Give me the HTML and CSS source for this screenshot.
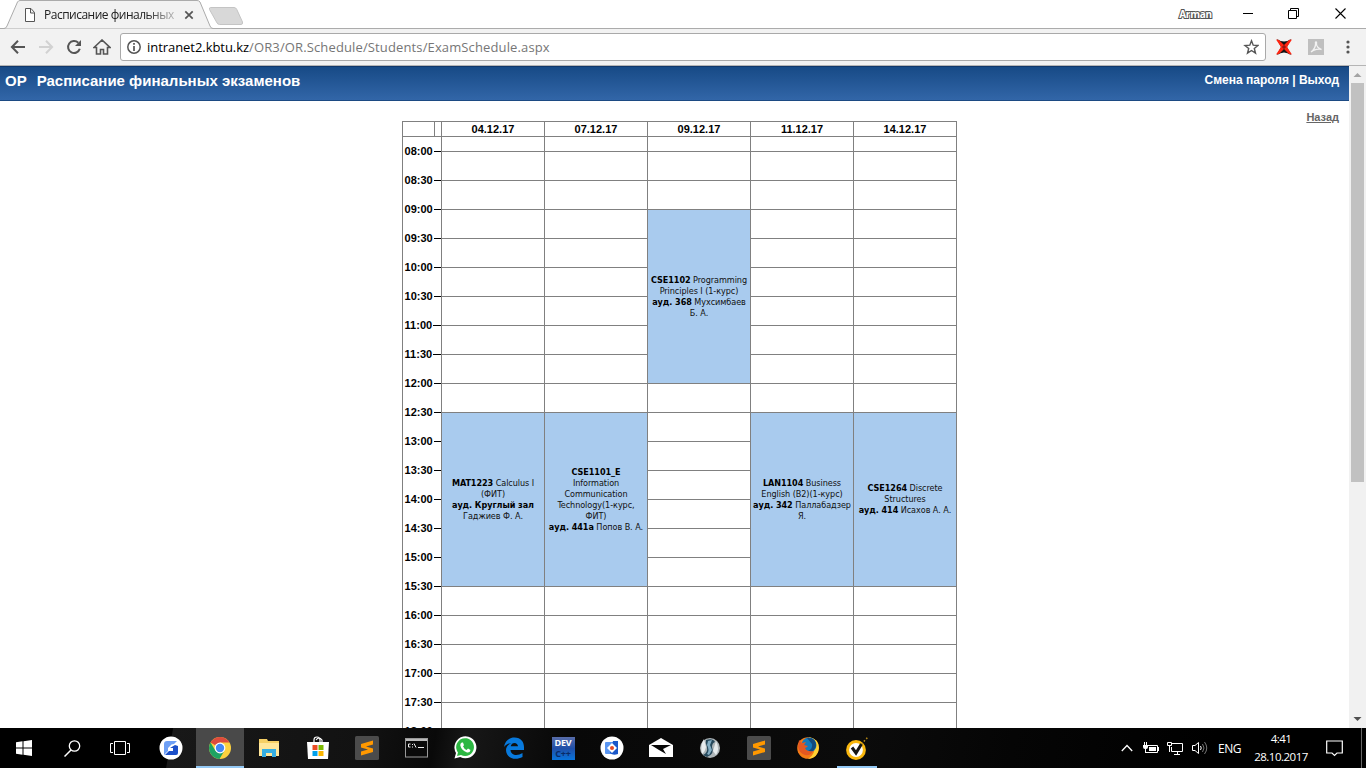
FILE: index.html
```html
<!DOCTYPE html>
<html lang="ru">
<head>
<meta charset="utf-8">
<title>Расписание финальных экзаменов</title>
<link rel="stylesheet" href="styles.css">
</head>
<body>
<div class="screen">
  <header class="tabstrip">
    <svg class="tab-shape" width="260" height="29" viewBox="0 0 260 29">
      <path d="M0 28.5H4Q6 28.5 7 26L17.500 2Q18.500 0.500 20 0.500H197Q199 0.500 200 2L210 26Q211 28.500 213 28.500H260V29H0Z" fill="#f2f2f2" stroke="#ababab"/>
      <path d="M210.500 7.500H234Q236 7.500 236.800 9.500L242.500 22Q243 24.500 241 24.500H219.500Q217.500 24.500 216.500 22L209.500 9.500Q209 7.500 210.500 7.500Z" fill="#d8d8d8" stroke="#c4c4c4"/>
    </svg>
    <div class="tab">
      <svg width="12" height="14" viewBox="0 0 12 14"><path d="M1.500 0.500H7L10.500 4.500V13.500H1.500ZM6.500 1V5H10.500" fill="#fff" stroke="#555"/></svg>
      <span class="tab-title">Расписание финальных</span>
      <svg class="tab-close" width="10" height="10" viewBox="0 0 10 10"><path d="M1.300 1.300L8.700 8.700M8.700 1.300L1.300 8.700" stroke="#555" stroke-width="1.700"/></svg>
    </div>
    <div class="window-controls">
      <span class="profile">Arman</span>
      <svg width="11" height="11" viewBox="0 0 11 11"><path d="M0 5.500H10" stroke="#000"/></svg>
      <svg width="11" height="11" viewBox="0 0 11 11"><path d="M0.500 2.500H8.500V10.500H0.500ZM2.500 2.500V0.500H10.500V8.500H8.500" fill="none" stroke="#000"/></svg>
      <svg width="11" height="11" viewBox="0 0 11 11"><path d="M0.500 0.500L10.500 10.500M10.500 0.500L0.500 10.500" stroke="#000" stroke-width="1.100"/></svg>
    </div>
  </header>

  <nav class="toolbar">
    <svg class="nav-back" width="16" height="16" viewBox="0 0 16 16"><path d="M15 8H2.500M8 1.700L1.900 8L8 14.300" fill="none" stroke="#555" stroke-width="2"/></svg>
    <svg class="nav-forward" width="16" height="16" viewBox="0 0 16 16"><path d="M1 8H13.500M8 1.700L14.100 8L8 14.300" fill="none" stroke="#d2d2d2" stroke-width="2"/></svg>
    <svg class="nav-reload" width="16" height="16" viewBox="0 0 16 16"><path d="M13.800 9.800A6 6 0 1 1 12.300 3.700" fill="none" stroke="#555" stroke-width="2"/><path d="M15 1V7H9Z" fill="#555"/></svg>
    <svg class="nav-home" width="18" height="16" viewBox="0 0 18 16"><path d="M1 8.500L9 1L17 8.500H14.500V15H10.500V10.500H7.500V15H3.500V8.500Z" fill="none" stroke="#555" stroke-width="1.600"/></svg>
    <div class="omnibox">
      <svg width="16" height="16" viewBox="0 0 16 16"><circle cx="8" cy="8" r="6.200" fill="none" stroke="#555" stroke-width="1.500"/><path d="M8 4V5.700M8 7V12" stroke="#555" stroke-width="1.700"/></svg>
      <span class="url"><span class="host">intranet2.kbtu.kz</span><span class="path">/OR3/OR.Schedule/Students/ExamSchedule.aspx</span></span>
      <svg width="16" height="16" viewBox="0 0 16 16"><path d="M8.500 1.800L10.200 6.200L15 6.500L11.300 9.500L12.500 14.100L8.500 11.500L4.500 14.100L5.700 9.500L2 6.500L6.800 6.200Z" fill="none" stroke="#555" stroke-width="1.400"/></svg>
    </div>
    <svg class="ext-x" width="18" height="18" viewBox="0 0 18 18"><path d="M2 1Q9 6 16 1L12 9L16 17Q9 12 2 17L6 9Z" fill="#111"/><path d="M1 1.500L4 2L9 7L14 2L17 1.500L12 9L17 16.500L14 16L9 11L4 16L1 16.500L6 9Z" fill="#ff2410"/><path d="M7 9H11M9 7V11" stroke="#711" /></svg>
    <svg class="ext-pdf" width="16" height="16" viewBox="0 0 16 16"><rect width="16" height="16" fill="#bfbfbf"/><path d="M3 13C6 11 8 7 7.500 4C7 2.500 9 2.500 8.500 4.500C8 7 11 10 13.500 10.500C11 9.500 6 10.500 3 13Z" fill="none" stroke="#f2f2f2" stroke-width="1.300"/></svg>
    <svg class="menu-dots" width="4" height="14" viewBox="0 0 4 14"><g fill="#555"><circle cx="2" cy="2" r="1.600"/><circle cx="2" cy="7" r="1.600"/><circle cx="2" cy="12" r="1.600"/></g></svg>
  </nav>

  <div class="viewport">
    <main class="page">
      <div class="banner">
        <div class="brand"><span class="logo">OP</span><h1>Расписание финальных экзаменов</h1></div>
        <div class="account">Смена пароля | Выход</div>
      </div>
      <div class="content">
        <div class="schedule">
          <div class="times">
            <div class="times-head"><i></i></div>
            <div class="time">08:00</div><div class="time">08:30</div><div class="time">09:00</div><div class="time">09:30</div>
            <div class="time">10:00</div><div class="time">10:30</div><div class="time">11:00</div><div class="time">11:30</div>
            <div class="time">12:00</div><div class="time">12:30</div><div class="time">13:00</div><div class="time">13:30</div>
            <div class="time">14:00</div><div class="time">14:30</div><div class="time">15:00</div><div class="time">15:30</div>
            <div class="time">16:00</div><div class="time">16:30</div><div class="time">17:00</div><div class="time">17:30</div>
            <div class="time">18:00</div>
          </div>
          <div class="day">
            <div class="date">04.12.17</div><div class="half"></div>
            <div class="free n9"></div>
            <div class="exam"><p><b>MAT1223</b> Calculus I</p><p>(ФИТ)</p><p><b>ауд. Круглый зал</b></p><p>Гаджиев Ф. А.</p></div>
            <div class="free n6"></div>
          </div>
          <div class="day">
            <div class="date">07.12.17</div><div class="half"></div>
            <div class="free n9"></div>
            <div class="exam"><p><b>CSE1101_E</b></p><p>Information</p><p>Communication</p><p>Technology(1-курс,</p><p>ФИТ)</p><p><b>ауд. 441а</b> Попов В. А.</p></div>
            <div class="free n6"></div>
          </div>
          <div class="day">
            <div class="date">09.12.17</div><div class="half"></div>
            <div class="free n2"></div>
            <div class="exam"><p><b>CSE1102</b> Programming</p><p>Principles I (1-курс)</p><p><b>ауд. 368</b> Мухсимбаев</p><p>Б. А.</p></div>
            <div class="free n13"></div>
          </div>
          <div class="day">
            <div class="date">11.12.17</div><div class="half"></div>
            <div class="free n9"></div>
            <div class="exam"><p><b>LAN1104</b> Business</p><p>English (B2)(1-курс)</p><p><b>ауд. 342</b> Паллабадзер</p><p>Я.</p></div>
            <div class="free n6"></div>
          </div>
          <div class="day last">
            <div class="date">14.12.17</div><div class="half"></div>
            <div class="free n9"></div>
            <div class="exam"><p><b>CSE1264</b> Discrete</p><p>Structures</p><p><b>ауд. 414</b> Исахов А. А.</p></div>
            <div class="free n6"></div>
          </div>
        </div>
        <a class="back">Назад</a>
      </div>
    </main>
    <aside class="scrollbar">
      <svg width="17" height="17" viewBox="0 0 17 17"><path d="M4.500 11L8.500 7L12.500 11Z" fill="#a3a3a3"/></svg>
      <div class="thumb"></div>
      <svg class="down" width="17" height="17" viewBox="0 0 17 17"><path d="M4.500 6L8.500 10L12.500 6Z" fill="#505050"/></svg>
    </aside>
  </div>

  <footer class="taskbar">
    <div class="system">
      <div class="sys"><svg width="16" height="16" viewBox="0 0 16 16"><path d="M0 2.200L6.500 1.300V7.500H0ZM7.500 1.200L16 0V7.500H7.500ZM0 8.500H6.500V14.700L0 13.800ZM7.500 8.500H16V16L7.500 14.800Z" fill="#fff"/></svg></div>
      <div class="sys"><svg width="17" height="17" viewBox="0 0 17 17"><circle cx="10.500" cy="6" r="5.200" fill="none" stroke="#fff" stroke-width="1.300"/><path d="M7 10L0.500 16.500" stroke="#fff" stroke-width="1.500"/></svg></div>
      <div class="sys"><svg width="20" height="14" viewBox="0 0 20 14"><path d="M4.500 0.500H15.500V13.500H4.500ZM3 2.500H0.500V11.500H3M17 2.500H19.500V11.500H17" fill="none" stroke="#fff"/></svg></div>
    </div>
    <div class="apps">
      <div class="app"><svg width="24" height="24" viewBox="0 0 24 24"><circle cx="12" cy="12" r="11.500" fill="#fff"/><path d="M5 8Q5 5 8 5H18L15 8L12.500 8.500L9 12V15L5 19Z" fill="#6d9ff5"/><path d="M19 10V17Q19 19 17 19H6L10 15H14V12H11L16 9Z" fill="#1b4fc9"/></svg></div>
      <div class="app active"><svg width="24" height="24" viewBox="0 0 24 24"><circle cx="12" cy="12" r="11" fill="#fcd13f"/><path d="M12 12L2.500 6.500A11 11 0 0 1 21.500 6.500H12Z" fill="#de4b3d"/><path d="M2.500 6.500A11 11 0 0 0 11.500 23L16.500 14.500L12 12L7.500 14.800Z" fill="#1da362"/><circle cx="12" cy="12" r="5.400" fill="#fff"/><circle cx="12" cy="12" r="4.200" fill="#4587f4"/></svg></div>
      <div class="app"><svg width="22" height="20" viewBox="0 0 22 20"><path d="M1 1H9L10 3H21V18H1Z" fill="#f5cf65"/><path d="M1 5H21V18H1Z" fill="#ffe69a"/><path d="M4 19V11H18V19H14V15H8V19Z" fill="#35aee2"/></svg></div>
      <div class="app"><svg width="24" height="24" viewBox="0 0 24 24"><path d="M8 8V4Q8 1 11 1Q14 1 14 4V8M10 4Q13 0 16 4V7" fill="none" stroke="#fff" stroke-width="1.200"/><path d="M1 6H23L22 23H2Z" fill="#fff"/><path d="M6.500 9H11.500V14H6.500Z" fill="#eb4d25"/><path d="M12.500 9H17.500V14H12.500Z" fill="#7bb900"/><path d="M6.500 15H11.500V20H6.500Z" fill="#00a1ed"/><path d="M12.500 15H17.500V20H12.500Z" fill="#fcb600"/></svg></div>
      <div class="app"><svg width="24" height="24" viewBox="0 0 24 24"><rect width="24" height="24" rx="1.500" fill="#4b4b4b"/><path d="M6 8L18 4.500V8.500L11 10.500L18 12.500V16L6 19.500V15.500L13 13.500L6 11.500Z" fill="#ff9800"/></svg></div>
      <div class="app"><svg width="23" height="20" viewBox="0 0 23 20"><rect x="0.500" y="0.500" width="22" height="18.500" fill="#0a0a0a" stroke="#999"/><path d="M1 2H22" stroke="#bbb" stroke-width="2"/><path d="M5.500 6H3.500V9H5.500M7.500 6V7M7.500 8.500V9.500M9 5.500L11 9.500M13 9.500H19" fill="none" stroke="#eee"/></svg></div>
      <div class="app"><svg width="24" height="24" viewBox="0 0 24 24"><path d="M1.500 22.500L3 17A11 11 0 1 1 7.200 21Z" fill="#fff"/><path d="M4 20L5 16.500A8.900 8.900 0 1 1 8 19Z" fill="#2cb742"/><path d="M8.800 6.500Q7 7.500 7.300 9.500Q8.500 14.500 14 16.500Q17 17 17.500 14L15 12.600L13.600 14Q11 13 10 10.300L11 9.200L10 6.500Z" fill="#fff"/></svg></div>
      <div class="app"><svg width="22" height="22" viewBox="0 0 22 22"><path d="M1 10C2 3 7 0.500 11.500 0.500C18 0.500 21 5 21 10V13H7.500C8 19 15 19 19.500 16V20C12 24 3 21 3 13C3 10 5 7.500 8.500 6C5 6.500 2.500 8 1 10ZM7.700 9.300H15C15 5 8.500 4.500 7.700 9.300Z" fill="#0879dc" fill-rule="evenodd"/></svg></div>
      <div class="app"><div class="dev"><span>DEV</span><span class="cpp">C++</span></div></div>
      <div class="app"><svg width="24" height="24" viewBox="0 0 24 24"><circle cx="12" cy="12" r="11.500" fill="#fff"/><rect x="5" y="6" width="9" height="12" rx="1" fill="#5a96f2"/><path d="M13 5H18V18Q13 20 10 17Z" fill="#1b58c9"/><path d="M12 7L17 12L12 17L7 12Z" fill="#fff"/><circle cx="12" cy="12" r="2" fill="#e34924"/></svg></div>
      <div class="app"><svg width="24" height="20" viewBox="0 0 24 20"><path d="M0 7L12 0L24 7V19H0Z" fill="#fff"/><path d="M2 7H22L14 11L17 16L10 12Z" fill="#080808"/></svg></div>
      <div class="app"><svg width="22" height="22" viewBox="0 0 22 22"><circle cx="11" cy="11" r="10" fill="#aeb5b8"/><path d="M5 2Q1 8 3 17Q6 15 7 10ZM17 4Q21 12 17 18L14 14Z" fill="#e7ecee"/><path d="M7 3Q14 1 16 5Q13 6 13 10Q16 17 8 20L4 18Q9 16 8 10Q6 6 7 3Z" fill="#26495c"/><path d="M9 4L13 3L11 8L13 13L10 18L8 17Q11 13 8 8Z" fill="#83adc3"/></svg></div>
      <div class="app"><svg width="24" height="24" viewBox="0 0 24 24"><rect width="24" height="24" rx="1.500" fill="#4b4b4b"/><path d="M6 8L18 4.500V8.500L11 10.500L18 12.500V16L6 19.500V15.500L13 13.500L6 11.500Z" fill="#ff9800"/></svg></div>
      <div class="app"><svg width="24" height="24" viewBox="0 0 24 24"><circle cx="12" cy="12" r="10.800" fill="#f47b16"/><path d="M13 1Q23 3 23 12Q22 22 12 23Q20 18 18 10Z" fill="#ffd233"/><circle cx="13" cy="9" r="7.500" fill="#147abb"/><path d="M11 2Q20 1 20 10Q18 17 12 15Q17 13 16 8Z" fill="#124a7e"/><path d="M3 4L6 7L10 6L8 9L12 10Q10 12 9 12Q11 16 17 15Q15 20 9 19Q3 17 2 11Z" fill="#e45821"/></svg></div>
      <div class="app running"><svg width="24" height="26" viewBox="0 0 24 26"><circle cx="11" cy="15" r="8.400" fill="#fff" stroke="#f9b70e" stroke-width="3"/><path d="M7 12.500L11 18L16.500 9" fill="none" stroke="#151515" stroke-width="3"/><path d="M16.500 9L23 2" stroke="#b88a15" stroke-width="1.500" stroke-dasharray="1.500 2"/></svg></div>
    </div>
    <div class="tray">
      <svg width="12" height="8" viewBox="0 0 12 8"><path d="M0.800 7L6 1.500L11.200 7" fill="none" stroke="#fff" stroke-width="1.300"/></svg>
      <svg class="battery" width="16" height="12" viewBox="0 0 16 12"><path d="M5 3.500H14.500V10.500H4.500" fill="none" stroke="#fff"/><path d="M6 5H13V9H6ZM15 5H16V9H15ZM0 3H5V5Q5 7 3 7V10H6V11H2V7Q0 7 0 5ZM1 0H2V3H1ZM3 0H4V3H3Z" fill="#fff"/></svg>
      <svg width="17" height="14" viewBox="0 0 17 14"><path d="M5 2.500H15.500V10.500H4.500V6M0.500 1.500H4.500V4.500H0.500ZM2.500 5V11M10.500 11V13M7 13.500H13" fill="none" stroke="#fff"/></svg>
      <svg width="16" height="14" viewBox="0 0 16 14"><path d="M0.500 4.500H3L6.500 1.500V12.500L3 9.500H0.500Z" fill="none" stroke="#fff"/><path d="M8.500 5Q10 7 8.500 9" fill="none" stroke="#fff"/><path d="M10.500 3Q13.500 7 10.500 11M12.500 1Q17 7 12.500 13" fill="none" stroke="#777"/></svg>
      <span class="lang">ENG</span>
      <div class="clock"><span class="hour">4:41</span><span class="today">28.10.2017</span></div>
      <svg class="notices" width="17" height="17" viewBox="0 0 17 17"><path d="M0.700 1H16.300V13H11L8.500 15.500L6 13H0.700Z" fill="none" stroke="#fff" stroke-width="1.200"/></svg>
      <i class="show-desktop"></i>
    </div>
  </footer>
</div>
</body>
</html>
```
FILE: styles.css
```css
* { box-sizing: border-box; }
body { margin: 0; overflow: hidden; background: #fff; }
svg { display: block; flex: none; }
p, h1 { margin: 0; }
.screen { width: 1366px; height: 768px; display: flex; flex-direction: column; overflow: hidden; }

.tabstrip { height: 29px; flex: none; display: flex; justify-content: space-between; position: relative; border-bottom: 1px solid #ababab; font-family: "Open Sans", sans-serif; }
.tab-shape { position: absolute; left: 0; top: 0; }
.tab { position: relative; display: flex; align-items: center; height: 28px; padding: 2px 0 0 24px; width: 200px; }
.tab-title { width: 131px; margin: -2px 0 0 8px; font-size: 12px; letter-spacing: -0.500px; white-space: nowrap; overflow: hidden; color: #222; -webkit-mask-image: linear-gradient(90deg, #000 78%, rgba(0,0,0,.25)); mask-image: linear-gradient(90deg, #000 78%, rgba(0,0,0,.25)); }
.tab-close { margin-left: 9px; }
.window-controls { display: flex; align-items: center; height: 27px; padding-right: 20px; gap: 35px; }
.window-controls svg + svg { margin-left: -1px; }
.window-controls svg:last-child { margin-left: 1px; }
.profile { font: bold 10px "Open Sans", sans-serif; color: #fff; -webkit-text-stroke: 2px #555; paint-order: stroke fill; margin-right: -4px; letter-spacing: -0.200px; }

.toolbar { height: 37px; flex: none; display: flex; align-items: center; background: #f2f2f2; border-bottom: 1px solid #b5b5b5; padding-left: 10px; }
.nav-forward, .nav-reload { margin-left: 12px; }
.nav-home { margin-left: 11px; }
.omnibox { width: 1146px; height: 28px; margin-left: 9px; padding: 0 6px 0 5px; display: flex; align-items: center; background: #fff; border: 1px solid #a9a9a9; border-radius: 3px; }
.url { flex: 1; margin-left: 5px; font: 13px "Open Sans", sans-serif; white-space: nowrap; }
.host { color: #000; letter-spacing: -0.050px; }
.path { color: #767676; letter-spacing: 0.130px; }
.ext-x { margin-left: 9px; }
.ext-pdf { margin-left: 15px; }
.menu-dots { margin-left: 22px; }

.viewport { height: 662px; flex: none; display: flex; }
.page { flex: 1; display: flex; flex-direction: column; overflow: hidden; font-family: "Liberation Sans", Arial, sans-serif; }
.banner { height: 35px; flex: none; display: flex; justify-content: space-between; padding: 0 10px 0 5px; color: #fff; font-weight: bold; background: linear-gradient(#174a86, #3266a8); border-top: 1px solid #11386b; border-bottom: 1px solid #1c4a83; }
.brand { display: flex; gap: 10px; font-size: 15px; line-height: 28px; }
.brand h1 { font-size: 15px; }
.account { font-size: 12px; line-height: 26px; }
.content { flex: 1; min-height: 0; display: flex; justify-content: space-between; padding: 20px 10px 0 402px; overflow: hidden; }
.back { margin-top: -10px; font: bold 11px/13px "Liberation Sans", Arial, sans-serif; color: #666; text-decoration: underline; }

.schedule { display: grid; grid-template-columns: 39px repeat(4, 103px) 104px; align-items: start; font-weight: bold; font-size: 11px; }
.times { border-left: 1px solid #808080; }
.times-head { height: 16px; border-top: 1px solid #808080; border-bottom: 1px solid #808080; padding-left: 31px; }
.times-head i { display: block; height: 14px; border-left: 1px solid #808080; }
.time { height: 29px; line-height: 29px; display: flex; align-items: center; padding-left: 1.600px; white-space: nowrap; }
.time::after { content: ""; height: 1px; background: #000; flex: 1; margin-left: 1.200px; }
.day { border-left: 1px solid #808080; }
.day.last { border-right: 1px solid #808080; }
.date { height: 16px; line-height: 15px; text-align: center; border-top: 1px solid #808080; border-bottom: 1px solid #808080; }
.half { height: 15px; border-bottom: 1px solid #808080; }
.free { background: repeating-linear-gradient(#fff 0, #fff 28px, #808080 28px, #808080 29px); }
.n2 { height: 58px; }
.n6 { height: 174px; }
.n9 { height: 261px; }
.n13 { height: 377px; }
.exam { height: 174px; display: flex; flex-direction: column; justify-content: center; background: #a9cbee; border-bottom: 1px solid #808080; font: 9px/11px "DejaVu Sans Condensed", "DejaVu Sans", sans-serif; font-stretch: condensed; letter-spacing: -0.060px; text-align: center; white-space: nowrap; color: #111; }
.exam b { color: #000; }

.scrollbar { width: 17px; display: flex; flex-direction: column; background: #f1f1f1; }
.thumb { width: 13px; height: 399px; margin: 0 2px; background: #c1c1c1; }
.down { margin-top: auto; }

.taskbar { height: 40px; flex: none; display: flex; background: linear-gradient(100deg, #000 0, #000 170px, #181818 171px, #121212 360px, #090909 430px, #171717 460px, #080808 560px, #0b0b0b 850px, #050505 1000px, #000 1200px); color: #fff; font-family: "Open Sans", sans-serif; }
.system { display: flex; width: 147px; }
.sys { width: 48px; display: flex; align-items: center; justify-content: center; }
.apps { display: flex; gap: 1px; flex: 1; }
.app { width: 48px; display: flex; align-items: center; justify-content: center; border-bottom: 2px solid transparent; padding-top: 2px; }
.active { background: #494949; border-bottom-color: #94c9f5; }
.running { background: linear-gradient(#94c9f5, #94c9f5) center bottom / 40px 2px no-repeat border-box; }
.dev { width: 23px; height: 23px; display: flex; flex-direction: column; align-items: center; background: linear-gradient(#586ca9, #204fa7 50%, #0874dc); font: bold 9px/11px "Open Sans", sans-serif; letter-spacing: -0.200px; }
.cpp { color: #092b68; }
.tray { display: flex; align-items: center; width: 245px; }
.tray svg + svg { margin-left: 8px; }
.tray svg.battery { margin-left: 10px; }
.lang { font-size: 12px; margin-left: 10px; width: 26px; letter-spacing: -0.500px; }
.clock { width: 62px; margin-left: 6px; display: flex; flex-direction: column; align-items: center; font-size: 11.500px; line-height: 18px; letter-spacing: -0.500px; }
.notices { margin-left: 14px; }
.show-desktop { width: 1px; height: 40px; margin-left: auto; margin-right: 4px; background: #666; }
```
